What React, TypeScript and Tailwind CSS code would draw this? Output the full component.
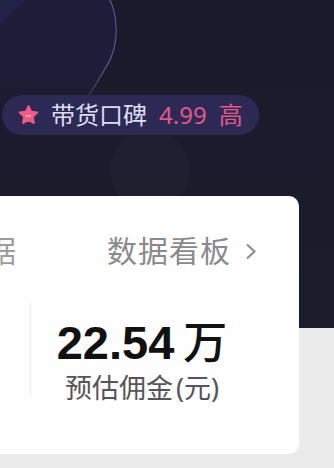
import React from "react";

const cjk = { fontFamily: '"Noto Sans","Noto Sans CJK SC",sans-serif' };

const Star = () => (
  <svg width="21" height="20" viewBox="0 0 20 19">
    <path
      d="M10 1.2l2.5 5.3 5.8 0.7-4.3 4 1.1 5.8-5.1-2.9-5.1 2.9 1.1-5.8-4.3-4 5.8-0.7z"
      fill="#ee5c84"
      stroke="#ee5c84"
      strokeWidth="2"
      strokeLinejoin="round"
    />
    <path d="M7.6 9.8q2.4 2 4.8 0" stroke="#ffb6c9" strokeWidth="1.1" fill="none" strokeLinecap="round" />
  </svg>
);

export default function App() {
  return (
    <div
      className="relative w-[334px] h-[468px] overflow-hidden bg-[linear-gradient(to_bottom,#1a1a2c_0px,#1b1c2c_328px,#ebebeb_328px)]"
      style={cjk}
    >
      {/* decorative glass tiles */}
      <div className="absolute left-0 top-0 h-[125px] w-[220px] overflow-hidden [mask-image:linear-gradient(to_bottom,black_50%,transparent_95%)]">
        <div className="absolute left-[-64px] top-[-50px] h-[160px] w-[160px] scale-y-[1.66]">
          <div className="h-full w-full rotate-45 rounded-[30px] border border-[#7472a8]/80 bg-[#201f40]/70" />
        </div>
        <div className="absolute left-[-80px] top-[-100px] h-[120px] w-[120px] rotate-45 rounded-[28px] bg-[#2a2858]/40" />
      </div>
      <div className="absolute left-[110px] top-[130px] w-[80px] h-[80px] rounded-full bg-white/[0.02]" />

      <div className="relative pt-[95px]">
        <div className="ml-[2px] flex h-[40px] w-[257px] items-center rounded-full bg-[#2c2a54] pl-[16px]">
          <Star />
          <span className="ml-[12px] text-[24px] leading-none text-[#dcdcf2]">带货口碑</span>
          <span className="ml-[12px] text-[24px] leading-none text-[#e0578a]">4.99</span>
          <span className="ml-[12px] text-[24px] leading-none text-[#e0578a]">高</span>
        </div>

        <div className="mt-[61px] h-[258px] w-[299px] rounded-r-[10px] bg-[#fefefe]">
          <div className="flex items-center justify-between pt-[40px] pr-[42px]">
            <span className="ml-[-44px] text-[30px] leading-none text-[#9c9c9c]">数据</span>
            <div className="flex items-center gap-[14px]">
              <span className="text-[30px] leading-none tracking-[1px] text-[#8a8a8a]">数据看板</span>
              <svg width="12" height="17" viewBox="0 0 12 17">
                <path d="M2 1.5l7.5 7-7.5 7" stroke="#8a8a8a" strokeWidth="2" fill="none" />
              </svg>
            </div>
          </div>

          <div className="mt-[37px] flex">
            <div className="ml-[30px] h-[93px] w-px bg-[#ececec]" />
            <div className="flex w-[222px] flex-col items-center pt-[16px]">
              <div className="flex items-baseline">
                <span
                  className="text-[47px] font-bold leading-none text-[#111]"
                  style={{ fontFamily: '"Liberation Sans",Arial,sans-serif' }}
                >
                  22.54
                </span>
                <span className="ml-[9px] text-[44px] font-medium leading-none text-[#111]">万</span>
              </div>
              <div className="mt-[8px] text-[27px] leading-none text-[#555]">
                预估佣金<span className="ml-[3px]">(元)</span>
              </div>
            </div>
          </div>
        </div>
      </div>
    </div>
  );
}
